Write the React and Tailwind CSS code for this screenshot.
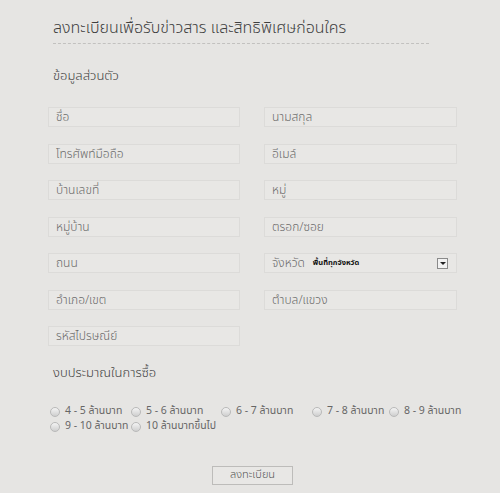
const fields = [
  ["ชื่อ", "นามสกุล"],
  ["โทรศัพท์มือถือ", "อีเมล์"],
  ["บ้านเลขที่", "หมู่"],
  ["หมู่บ้าน", "ตรอก/ซอย"],
  ["ถนน", null],
  ["อำเภอ/เขต", "ตำบล/แขวง"],
  ["รหัสไปรษณีย์", ""],
]

const Field = ({ label }) => (
  <div className="h-[20px] border border-[#dcdbd9] bg-[#e8e7e5] flex items-center px-[7px] text-[12px] font-light text-[#6a6a6a]">
    {label}
  </div>
)

const Radio = ({ label, className = "" }) => (
  <label className={"flex items-center gap-[5px] whitespace-nowrap " + className}>
    <span className="w-[10px] h-[10px] shrink-0 rounded-full border border-[#b9b9b9] bg-gradient-to-b from-[#f4f4f4] to-[#cfcfcf]" />
    <span>{label}</span>
  </label>
)

const App = () => {
  return (
    <div
      className="w-[500px] h-[493px] bg-[#e6e5e3] text-[#555] overflow-hidden"
      style={{ fontFamily: '"Noto Sans Thai", "Noto Sans", "Liberation Sans", sans-serif' }}
    >
      <div className="pl-[53px] pt-[16px]">
        <h1 className="text-[16px] leading-[24px] font-light text-[#3f3f3f]">
          ลงทะเบียนเพื่อรับข่าวสาร และสิทธิพิเศษก่อนใคร
        </h1>
        <div className="mt-[3px] w-[376px] border-t border-dashed border-[#c2c1bf]" />
        <h2 className="mt-[23px] text-[13px] leading-[18px] font-light text-[#3f3f3f]">ข้อมูลส่วนตัว</h2>
      </div>

      <div className="ml-[48px] mt-[22px] w-[409px] grid grid-cols-[192px_193px] gap-x-[24px] gap-y-[16.5px]">
        {fields.map(([a, b], i) => (
          <div key={i} className="contents">
            <Field label={a} />
            {b === null ? (
              <div className="h-[20px] border border-[#dcdbd9] bg-[#e8e7e5] flex items-center px-[7px] text-[12px] font-light text-[#6a6a6a]">
                <span>จังหวัด</span>
                <span className="ml-[8px] text-[7.5px] font-bold text-[#111]">พื้นที่ทุกจังหวัด</span>
                <span className="ml-auto mr-[1px] w-[11px] h-[11px] border border-[#8a8a8a] bg-[#f2f2f2] flex items-center justify-center">
                  <span className="block w-0 h-0 border-l-[3px] border-r-[3px] border-t-[3px] border-l-transparent border-r-transparent border-t-[#222]" />
                </span>
              </div>
            ) : b === "" ? (
              <div />
            ) : (
              <Field label={b} />
            )}
          </div>
        ))}
      </div>

      <h2 className="ml-[53px] mt-[18px] text-[13px] leading-[18px] font-light text-[#3f3f3f]">งบประมาณในการซื้อ</h2>

      <div className="ml-[50px] mt-[22px] text-[10.5px] leading-[15px] text-[#666]">
        <div className="flex">
          <Radio label="4 - 5 ล้านบาท" className="w-[81px]" />
          <Radio label="5 - 6 ล้านบาท" className="w-[90px]" />
          <Radio label="6 - 7 ล้านบาท" className="w-[91px]" />
          <Radio label="7 - 8 ล้านบาท" className="w-[77px]" />
          <Radio label="8 - 9 ล้านบาท" />
        </div>
        <div className="flex">
          <Radio label="9 - 10 ล้านบาท" className="w-[81px]" />
          <Radio label="10 ล้านบาทขึ้นไป" />
        </div>
      </div>

      <div className="flex justify-center mt-[32px] pl-[5px]">
        <button className="w-[81px] h-[19px] border border-[#bdbcba] bg-[#e8e7e5] text-[11px] font-light text-[#555] flex items-center justify-center">
          ลงทะเบียน
        </button>
      </div>
    </div>
  )
}

export default App
